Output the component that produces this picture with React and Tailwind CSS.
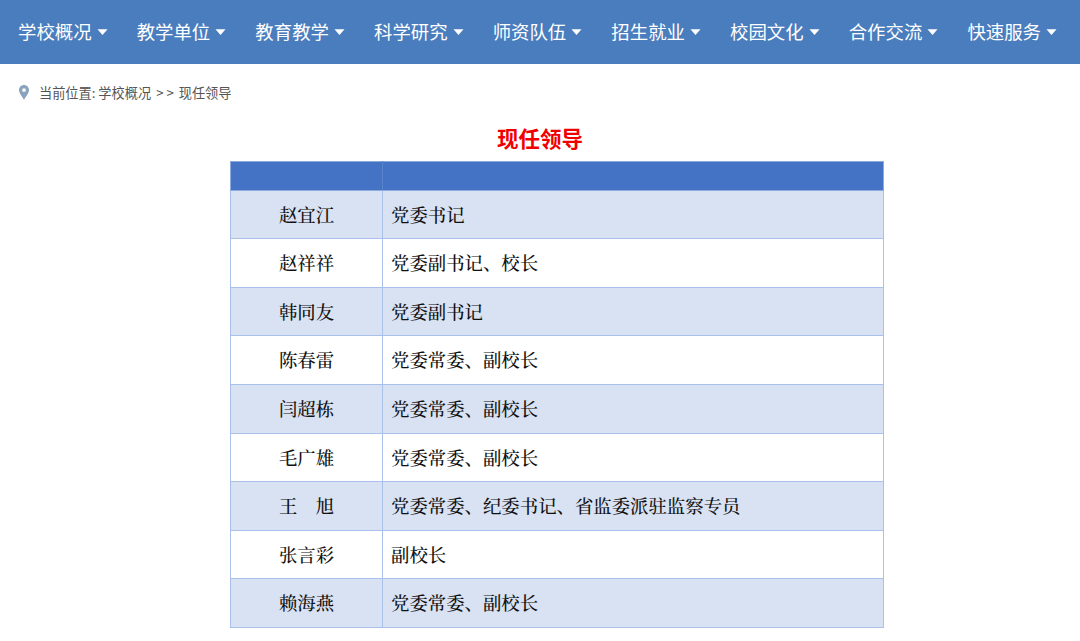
const navItems = ['学校概况', '教学单位', '教育教学', '科学研究', '师资队伍', '招生就业', '校园文化', '合作交流', '快速服务'];

const leaders = [
  ['赵宜江', '党委书记'],
  ['赵祥祥', '党委副书记、校长'],
  ['韩同友', '党委副书记'],
  ['陈春雷', '党委常委、副校长'],
  ['闫超栋', '党委常委、副校长'],
  ['毛广雄', '党委常委、副校长'],
  ['王\u3000旭', '党委常委、纪委书记、省监委派驻监察专员'],
  ['张言彩', '副校长'],
  ['赖海燕', '党委常委、副校长'],
];

function Caret() {
  return (
    <svg width="11" height="6" viewBox="0 0 11 6" className="ml-[5px] mt-[1px] shrink-0">
      <path d="M0.5 0.2h10L5.5 6z" fill="#fff" />
    </svg>
  );
}

function Pin() {
  return (
    <svg width="10" height="15" viewBox="0 0 10 15">
      <path
        fillRule="evenodd"
        d="M5 0C2.2 0 0 2.2 0 5c0 3.4 3.4 6.8 5 10 1.6-3.2 5-6.6 5-10 0-2.8-2.2-5-5-5zm0 3.2a1.9 1.9 0 1 1 0 3.8 1.9 1.9 0 0 1 0-3.8z"
        fill="#8aa3bd"
      />
    </svg>
  );
}

export default function App() {
  return (
    <div className="h-[641px] w-[1080px] overflow-hidden bg-white font-['Noto_Sans_CJK_SC',sans-serif]">
      {/* Top nav */}
      <nav className="flex h-16 items-center gap-[29.1px] bg-[#4a7dbd] pb-[2px] pl-[18px]">
        {navItems.map((item) => (
          <a key={item} className="flex items-center text-[18.4px] leading-none text-white">
            {item}
            <Caret />
          </a>
        ))}
      </nav>

      {/* Breadcrumb */}
      <div className="flex h-[58px] items-center pl-[19px] pb-[1px] text-[13.2px] text-[#555]">
        <Pin />
        <span className="ml-[10px]">当前位置: 学校概况</span>
        <span className="ml-[5px]">&gt; &gt;</span>
        <span className="ml-[5px]">现任领导</span>
      </div>

      <h1 className="h-[39px] text-center text-[21.5px] font-bold leading-[31px] text-[#f00000]">现任领导</h1>

      {/* Leaders table */}
      <table className="ml-[230px] w-[654px] table-fixed border-collapse font-['Noto_Serif_CJK_SC','Noto_Sans_CJK_SC',serif] text-[18.4px] font-medium text-[#111]">
        <thead>
          <tr className="h-[28.6px] bg-[#4472c4]">
            <th className="w-[152px] border border-[#8eaadb] border-r-[#5a83cc]"></th>
            <th className="border border-[#8eaadb] border-l-[#5a83cc]"></th>
          </tr>
        </thead>
        <tbody>
          {leaders.map(([name, title], i) => (
            <tr key={name} className={i % 2 === 0 ? 'h-[48.6px] bg-[#d9e2f3]' : 'h-[48.6px] bg-white'}>
              <td className="border border-[#a9c0ea] text-center">{name}</td>
              <td className="border border-[#a9c0ea] pl-2">{title}</td>
            </tr>
          ))}
        </tbody>
      </table>
    </div>
  );
}
